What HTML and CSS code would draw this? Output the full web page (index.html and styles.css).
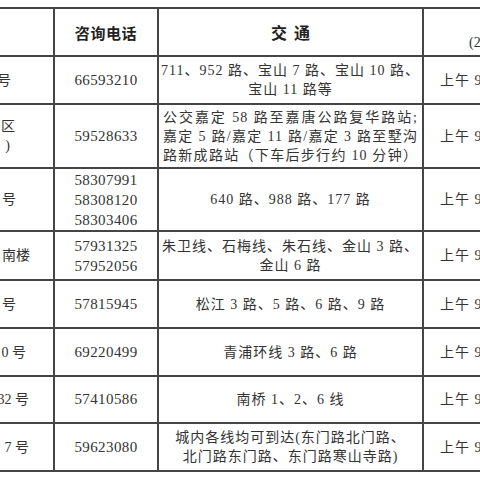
FILE: index.html
```html
<!DOCTYPE html>
<html lang="zh-CN">
<head>
<meta charset="utf-8">
<link rel="stylesheet" href="styles.css">
</head>
<body>
<div class="page">
  <div class="grid">
    <div class="c addr"></div>
    <div class="c head">咨询电话</div>
    <div class="c head wide">交通</div>
    <div class="c time head-time"><span class="h1">办公时间</span><span class="h2">(2024 年 1 月起)</span></div>

    <div class="c addr a1">号</div>
    <div class="c tel">66593210</div>
    <div class="c bus">711、952 路、宝山 7 路、宝山 10 路、<br>宝山 11 路等</div>
    <div class="c time">上午 9:00—11:30 下午 13:30—17:00</div>

    <div class="c addr a2"><span>区</span><span class="paren">)</span></div>
    <div class="c tel">59528633</div>
    <div class="c bus just"><span>公交嘉定 58 路至嘉唐公路复华路站;</span><span>嘉定 5 路/嘉定 11 路/嘉定 3 路至墅沟</span><span>路新成路站（下车后步行约 10 分钟）</span></div>
    <div class="c time">上午 9:00—11:30 下午 13:30—17:00</div>

    <div class="c addr a3">号</div>
    <div class="c tel multi">58307991<br>58308120<br>58303406</div>
    <div class="c bus">640 路、988 路、177 路</div>
    <div class="c time">上午 9:00—11:30 下午 13:30—17:00</div>

    <div class="c addr a4">南楼</div>
    <div class="c tel multi">57931325<br>57952056</div>
    <div class="c bus">朱卫线、石梅线、朱石线、金山 3 路、<br>金山 6 路</div>
    <div class="c time">上午 9:00—11:30 下午 13:30—17:00</div>

    <div class="c addr a5">号</div>
    <div class="c tel">57815945</div>
    <div class="c bus">松江 3 路、5 路、6 路、9 路</div>
    <div class="c time">上午 9:00—11:30 下午 13:30—17:00</div>

    <div class="c addr a6">0 号</div>
    <div class="c tel">69220499</div>
    <div class="c bus">青浦环线 3 路、6 路</div>
    <div class="c time">上午 9:00—11:30 下午 13:30—17:00</div>

    <div class="c addr a7">32 号</div>
    <div class="c tel">57410586</div>
    <div class="c bus">南桥 1、2、6 线</div>
    <div class="c time">上午 9:00—11:30 下午 13:30—17:00</div>

    <div class="c addr a8">7 号</div>
    <div class="c tel">59623080</div>
    <div class="c bus">城内各线均可到达(东门路北门路、<br>北门路东门路、东门路寒山寺路)</div>
    <div class="c time">上午 9:00—11:30 下午 13:30—17:00</div>
  </div>
</div>
</body>
</html>
```

FILE: styles.css
```css
html, body {
  margin: 0;
  background: #ffffff;
}

.page {
  width: 480px;
  height: 480px;
  overflow: hidden;
  padding-top: 7px;
  box-sizing: border-box;
}

.grid {
  display: grid;
  grid-template-columns: 55px 104px 265px 200px;
  grid-template-rows: 48px 48px 64px 63px 49px 48px 48px 47px 48px;
  border-top: 2px solid #454545;
  width: 624px;
  font-family: "Liberation Serif", "Noto Sans CJK SC", serif;
  font-size: 14px;
  line-height: 19px;
  color: #333333;
}

.c {
  box-sizing: border-box;
  border-right: 2px solid #454545;
  border-bottom: 2px solid #454545;
  display: flex;
  flex-direction: column;
  justify-content: center;
  align-items: center;
  text-align: center;
  white-space: nowrap;
  overflow: hidden;
}

.head {
  font-family: "Noto Sans CJK SC", sans-serif;
  font-weight: 700;
  font-size: 15px;
  letter-spacing: 0.6px;
  color: #222;
}

.head.wide {
  font-size: 16px;
  letter-spacing: 7px;
  padding-left: 7px;
}

.addr {
  align-items: flex-end;
}

.a1 { padding-right: 42px; }
.a2 { padding-right: 38px; }
.a2 .paren { padding-right: 5px; }
.a3 { padding-right: 37px; }
.a4 { padding-right: 23px; }
.a5 { padding-right: 37px; }
.a6 { padding-right: 27px; }
.a7 { padding-right: 24px; }
.a8 { padding-right: 24px; }

.a2 span {
  display: block;
}

.tel {
  font-size: 15px;
  letter-spacing: 0.4px;
}

.tel.multi {
  line-height: 20px;
}

.bus {
  letter-spacing: 1px;
}

.just {
  align-items: stretch;
  padding: 0 4px;
}

.just span {
  display: block;
  text-align: justify;
  text-align-last: justify;
}

.time {
  border-right: none;
  align-items: flex-start;
  padding-left: 16px;
  letter-spacing: 1px;
}

.head-time {
  padding-left: 45px;
}

.head-time .h1 {
  font-family: "Noto Sans CJK SC", sans-serif;
  font-weight: 700;
  font-size: 15px;
  line-height: 21px;
  margin-left: 70px;
}

.head-time .h2 {
  line-height: 21px;
  letter-spacing: 0;
}
```
